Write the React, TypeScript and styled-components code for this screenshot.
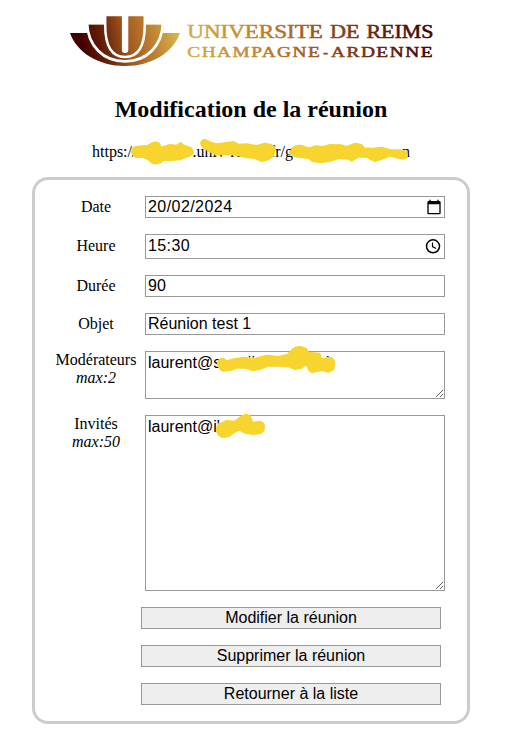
import React from "react";
import styled, { createGlobalStyle } from "styled-components";

const GlobalStyle = createGlobalStyle`
  * { box-sizing: border-box; }
  body {
    margin: 0;
    background: #fff;
    color: #000;
    font: 16px/18px "Liberation Serif", "Times New Roman", serif;
  }
`;

const Page = styled.main`
  width: 507px;
  height: 752px;
  padding: 5px 0 0;
  display: flex;
  flex-direction: column;
  overflow: hidden;
`;

const Logo = styled.svg`
  display: block;
  width: 507px;
  height: 70px;
  flex: none;
`;

const Title = styled.h1`
  margin: 20px 0 0;
  width: 502px;
  font-size: 24px;
  line-height: 28px;
  text-align: center;
`;

const MeetingLink = styled.div`
  position: relative;
  display: flex;
  width: 318px;
  height: 18px;
  margin: 20px 0 0 92px;
  white-space: nowrap;
`;

const LinkPart = styled.span<{ $width: number; $end?: boolean }>`
  display: flex;
  flex: none;
  width: ${(p) => p.$width}px;
  justify-content: ${(p) => (p.$end ? "flex-end" : "flex-start")};
`;

const Card = styled.form`
  width: 438px;
  height: 547px;
  margin: 16px 0 0 32px;
  padding: 16px 0 0 13px;
  border: 3px solid #ccc;
  border-radius: 16px;
  display: flex;
  flex-direction: column;
  gap: 16px;
`;

const Row = styled.div`
  display: grid;
  grid-template-columns: 96px 300px;
  gap: 1px;
`;

const Label = styled.label<{ $middle?: boolean }>`
  text-align: center;
  align-self: ${(p) => (p.$middle ? "center" : "start")};
  em { display: block; }
`;

const TimeLabel = styled(Label)`
  padding-bottom: 2px;
`;

const Control = styled.div`
  position: relative;
  display: flex;
`;

const TextInput = styled.input<{ $height: number; $spacing?: number }>`
  width: 300px;
  height: ${(p) => p.$height}px;
  padding: 0 2px 1px;
  border: 1px solid #999;
  border-radius: 0;
  outline: none;
  background: #fff;
  color: #000;
  font: 16px/18px "Liberation Sans", Arial, sans-serif;
  letter-spacing: ${(p) => p.$spacing ?? 0}px;
`;

const TextArea = styled.textarea<{ $height: number }>`
  width: 300px;
  height: ${(p) => p.$height}px;
  padding: 2px;
  border: 1px solid #999;
  outline: none;
  resize: both;
  overflow: auto;
  background: #fff;
  color: #000;
  font: 16px/18px "Liberation Sans", Arial, sans-serif;
`;

const PickerIcon = styled.svg<{ $right: number; $top: number }>`
  position: absolute;
  right: ${(p) => p.$right}px;
  top: ${(p) => p.$top}px;
  width: 16px;
  height: 16px;
`;

const Marker = styled.svg<{ $left: number; $top: number }>`
  position: absolute;
  left: ${(p) => p.$left}px;
  top: ${(p) => p.$top}px;
  width: 150px;
  height: 110px;
  overflow: visible;
  pointer-events: none;
  fill: #f7d42e;
  stroke: #f7d42e;
  stroke-width: 6;
  stroke-linecap: round;
  stroke-linejoin: round;
`;

const Button = styled.button`
  width: 300px;
  height: 22px;
  margin-left: 93px;
  padding: 0 0 1px;
  border: 1px solid #999;
  border-radius: 0;
  background: #eee;
  color: #000;
  font: 16px/18px "Liberation Sans", Arial, sans-serif;
`;

const gap = (count: number) => "\u00a0".repeat(count);

function UniversityLogo() {
  return (
    <Logo viewBox="0 5 507 70" role="img" aria-label="Université de Reims Champagne-Ardenne">
      <defs>
        <linearGradient id="petals" gradientUnits="userSpaceOnUse" x1="82" y1="44" x2="175" y2="24">
          <stop offset="0" stopColor="#440000" />
          <stop offset=".22" stopColor="#642008" />
          <stop offset=".5" stopColor="#a65c20" />
          <stop offset=".78" stopColor="#c28a36" />
          <stop offset="1" stopColor="#d7b34c" />
        </linearGradient>
        <linearGradient id="letters" gradientUnits="userSpaceOnUse" x1="187" y1="0" x2="434" y2="0">
          <stop offset="0" stopColor="#d4ae48" />
          <stop offset=".3" stopColor="#bd812f" />
          <stop offset=".52" stopColor="#9c5420" />
          <stop offset=".76" stopColor="#682710" />
          <stop offset="1" stopColor="#3c0000" />
        </linearGradient>
      </defs>
      <g fill="url(#petals)">
        <path d="M70 33H180C173 53 151 66 125 66S77 53 70 33Z" />
        <path d="M87 23H163C162 46 147 61.3 125 61.3S88 46 87 23Z" stroke="#fff" strokeWidth="2.8" />
        <path d="M105.2 15H144.8V25C144.8 48 137 57 125 57S105.2 48 105.2 25Z" stroke="#fff" strokeWidth="2.5" />
      </g>
      <path d="M121.9 14H128.3V49.8Q128.3 53 125.1 53T121.9 49.8Z" fill="#fff" />
      <path d="M68 13H105V16H68ZM145 13H182V16H145ZM80 21H105V24.2H80ZM145.2 21H170V24.2H145.2ZM68 31H86V33H68ZM164 31H182V33H164Z" fill="#fff" />
      <g fill="url(#letters)" stroke="url(#letters)" strokeWidth=".5" fontFamily="Liberation Serif, serif">
        <g fontSize="18.2">
          <text x="187.3" y="38.2" textLength="135.5" lengthAdjust="spacingAndGlyphs">UNIVERSITE</text>
          <text x="330" y="38.2" textLength="29.5" lengthAdjust="spacingAndGlyphs">DE</text>
          <text x="366.5" y="38.2" textLength="67" lengthAdjust="spacingAndGlyphs">REIMS</text>
        </g>
        <g fontSize="15.4" letterSpacing="1.2">
          <text x="187.3" y="56.8" textLength="134" lengthAdjust="spacingAndGlyphs">CHAMPAGNE</text>
          <text x="323" y="56.8">-</text>
          <text x="331" y="56.8" textLength="103" lengthAdjust="spacingAndGlyphs">ARDENNE</text>
        </g>
      </g>
    </Logo>
  );
}

export default function App() {
  return (
    <>
      <GlobalStyle />
      <Page>
        <UniversityLogo />
        <Title>Modification de la réunion</Title>
        <MeetingLink>
          <LinkPart $width={100.5}>https://</LinkPart>
          <LinkPart $width={92.5}>.univ-reims.fr/</LinkPart>
          <LinkPart $width={8}>g</LinkPart>
          <LinkPart $width={117} $end>n</LinkPart>
          <Marker $left={-12} $top={-53} viewBox="0 0 450 330">
            <path d="M156 187Q156 174 168 171L185 169 205 167 217 159Q229 155 237 161L243 173 270 165 290 167 302 159 312 167 332 174Q340 182 338 190L330 197 315 202 300 208 275 210 250 209 240 218Q225 223 215 217L205 208 190 201 167 201Z" />
            <path d="M363 160Q366 148 379 151L392 158 410 163 440 159 460 156 475 164 500 163 530 168 555 161 574 165Q586 172 584 183L579 198 562 209 545 213 525 204 500 202 480 197 465 193 435 192 410 194 390 184 370 173Z" />
            <path d="M630 187 640 173Q655 162 672 171L688 175 705 169 730 171 750 165 785 166 800 171 825 161 845 165 852 175 880 176 905 173 930 180 955 181 975 183Q983 192 980 202L972 206 955 203 930 197 910 205 885 213 868 205 860 200 835 200 815 212 800 204 775 205 750 212 725 217 700 214 685 204 660 201 640 197Z" />
          </Marker>
        </MeetingLink>
        <Card>
          <Row>
            <Label $middle htmlFor="date">Date</Label>
            <Control>
              <TextInput id="date" $height={22} $spacing={0.44} defaultValue="20/02/2024" />
              <PickerIcon $right={3} $top={3} viewBox="0 0 24 24">
                <path d="M20 3h-1V1h-2v2H7V1H5v2H4c-1.1 0-2 .9-2 2v16c0 1.1.9 2 2 2h16c1.1 0 2-.9 2-2V5c0-1.1-.9-2-2-2zm0 18H4V8h16v13z" />
              </PickerIcon>
            </Control>
          </Row>
          <Row>
            <TimeLabel $middle htmlFor="heure">Heure</TimeLabel>
            <Control>
              <TextInput id="heure" $height={25} $spacing={0.4} defaultValue="15:30" />
              <PickerIcon $right={4.5} $top={4} viewBox="0 0 16 16" fill="none" stroke="#000" strokeWidth="1.5">
                <circle cx="8" cy="8.3" r="6.5" />
                <path d="M7.5 4.5V8.6L11 10.6" strokeWidth="1.2" />
              </PickerIcon>
            </Control>
          </Row>
          <Row>
            <Label $middle htmlFor="duree">Durée</Label>
            <Control><TextInput id="duree" $height={22} defaultValue="90" /></Control>
          </Row>
          <Row>
            <Label $middle htmlFor="objet">Objet</Label>
            <Control><TextInput id="objet" $height={22} defaultValue="Réunion test 1" /></Control>
          </Row>
          <Row>
            <Label htmlFor="moderateurs">Modérateurs<em>max:2</em></Label>
            <Control>
              <TextArea id="moderateurs" $height={48} spellCheck={false} defaultValue={`laurent@s${gap(6)}ii${gap(16)}i`} />
              <Marker $left={55} $top={-11} viewBox="0 0 450 330">
                <path d="M54 69Q57 54 72 58L80 64 105 57 135 53 160 58 185 51 200 47 235 51 263 44 280 27Q296 15 317 26L325 38 358 41 364 58 392 53Q404 59 402 73L400 87 385 95 365 90 337 96Q325 93 324 79L318 72 305 83 285 87 265 79 235 77 205 77 185 85 160 91 135 83 110 83 90 91 68 92Q56 87 54 69Z" />
              </Marker>
            </Control>
          </Row>
          <Row>
            <Label htmlFor="invites">Invités<em>max:50</em></Label>
            <Control>
              <TextArea id="invites" $height={176} spellCheck={false} defaultValue="laurent@i'" />
              <Marker $left={55} $top={-75} viewBox="0 0 450 330">
                <path d="M51 270Q51 257 62 251L80 243 105 245 122 231 137 224Q152 225 153 238L157 249 178 245Q193 247 192 263 190 277 180 279L160 282 137 279 118 269 100 278 85 289Q70 294 59 286 52 282 51 270Z" />
              </Marker>
            </Control>
          </Row>
          <Button type="button">Modifier la réunion</Button>
          <Button type="button">Supprimer la réunion</Button>
          <Button type="button">Retourner à la liste</Button>
        </Card>
      </Page>
    </>
  );
}
